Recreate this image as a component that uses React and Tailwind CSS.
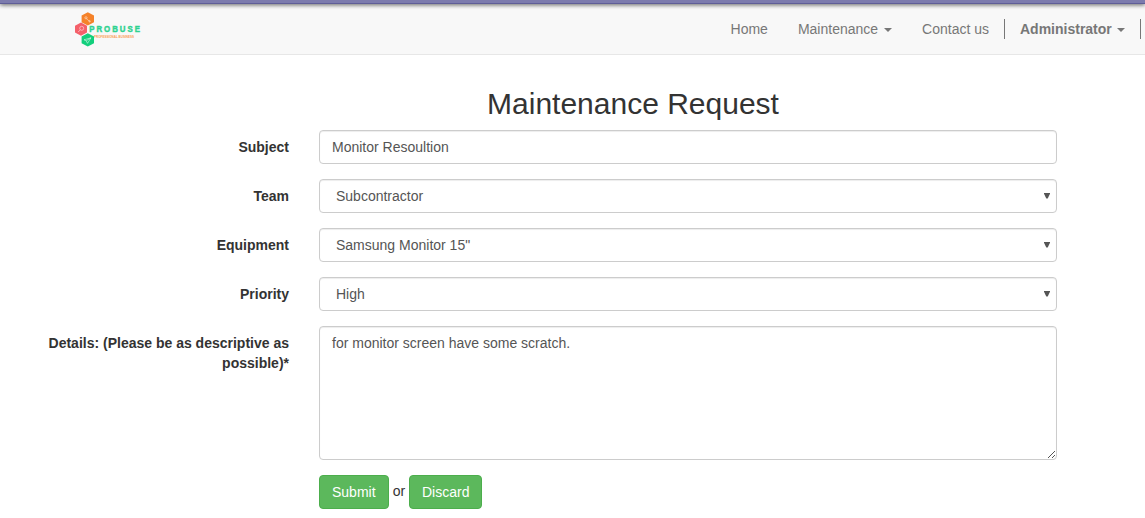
import React from "react";

const control =
  "block w-full rounded-[4px] border border-[#ccc] bg-white text-[14px] leading-[20px] text-[#555] shadow-[inset_0_1px_1px_rgba(0,0,0,0.075)] outline-none";

function Logo() {
  return (
    <svg width="70" height="38" viewBox="0 0 70 38" role="img" aria-label="Probuse">
      <g transform="translate(0 -0.7)">
        <polygon points="14.8,2 21,5.2 21,12 14.8,15.3 8.6,12 8.6,5.2" fill="#f5822a" />
        <polygon points="8,12.2 14,15.4 14,22.2 8,25.4 2,22.2 2,15.4" fill="#f4606a" />
        <polygon points="14.8,23 21,26.2 21,33 14.8,36.3 8.6,33 8.6,26.2" fill="#12cf7c" />
        <g fill="none" stroke="#fff" strokeOpacity="0.6" strokeWidth="0.8">
          <circle cx="13" cy="7.5" r="1.1" />
          <path d="M13.5 8.5l3 2.5" />
          <circle cx="16.6" cy="11" r="0.7" />
          <circle cx="8.7" cy="18" r="2" />
          <path d="M7.2 19.5l-2 2.2" />
          <path d="M11 29.5l7-2-3.5 5.5-1.3-2.5zM13.2 30.5l4.8-3" />
        </g>
      </g>
      <text
        transform="translate(16.2 20.9) scale(0.8 1)"
        x="0"
        y="0"
        textLength="63.5"
        lengthAdjust="spacing"
        fontFamily="Liberation Sans, sans-serif"
        fontWeight="700"
        fontSize="9.8"
        fill="#2fd290"
        stroke="#2fd290"
        strokeWidth="0.5"
      >
        PROBUSE
      </text>
      <text
        x="21"
        y="27"
        textLength="40"
        lengthAdjust="spacingAndGlyphs"
        fontFamily="Liberation Sans, sans-serif"
        fontWeight="700"
        fontSize="3.8"
        fill="#f9a055"
      >
        PROFESSIONAL BUSINESS
      </text>
    </svg>
  );
}

function Caret({ className = "ml-[6px]" }) {
  return (
    <span
      className={className + " inline-block border-x-4 border-t-4 border-x-transparent border-t-[#777] align-middle"}
    />
  );
}

function Row({ label, id, children }) {
  return (
    <div className="mb-[15px] flex">
      <label htmlFor={id} className="w-[289px] shrink-0 pt-[7px] pl-[30px] text-right font-bold">
        {label}
      </label>
      <div className="relative ml-[30px] w-[738px]">{children}</div>
    </div>
  );
}

function SelectRow({ label, id, value }) {
  return (
    <Row label={label} id={id}>
      <select id={id} defaultValue={value} className={control + " h-[34px] appearance-none px-[16px] py-[6px]"}>
        <option>{value}</option>
      </select>
      <svg className="pointer-events-none absolute top-[14px] right-[7px]" width="6" height="6" viewBox="0 0 6 6">
        <path d="M0 0h6v0.8L3.7 5.6H2.3L0 0.8z" fill="#555" />
      </svg>
    </Row>
  );
}

export default function App() {
  return (
    <div className="h-[518px] overflow-hidden bg-white font-['Liberation_Sans',Arial,sans-serif] text-[14px] leading-[20px] text-[#333]">
      <div className="relative h-[4px] border-b border-[#5f5e97] bg-[#7c7bad] shadow-[0_1px_4px_rgba(0,0,0,0.65)]" />
      <header className="flex h-[51px] border-b border-[#e7e7e7] bg-[#f8f8f8] text-[#777]">
        <a className="ml-[73px] pt-[7px]" href="#">
          <Logo />
        </a>
        <nav className="mt-[15px] mr-[4px] ml-auto flex h-[20px] whitespace-nowrap">
          <a className="px-[15px]" href="#">Home</a>
          <a className="px-[15px]" href="#">Maintenance<Caret /></a>
          <a className="px-[15px]" href="#">Contact us</a>
          <a className="w-[137px] border-x border-[#777] pl-[15px] font-bold" href="#">
            Administrator<Caret className="ml-[5px]" />
          </a>
        </nav>
      </header>
      <main className="pt-[32px]">
        <h2 className="mb-[10px] ml-[121px] w-[1024px] text-center text-[30px] leading-[33px]">Maintenance Request</h2>
        <form>
          <Row label="Subject" id="subject">
            <input id="subject" defaultValue="Monitor Resoultion" className={control + " h-[34px] px-[12px] py-[6px]"} />
          </Row>
          <SelectRow label="Team" id="team" value="Subcontractor" />
          <SelectRow label="Equipment" id="equipment" value={'Samsung Monitor 15"'} />
          <SelectRow label="Priority" id="priority" value="High" />
          <Row label="Details: (Please be as descriptive as possible)*" id="details">
            <textarea
              id="details"
              spellCheck={false}
              defaultValue="for monitor screen have some scratch."
              className={control + " h-[134px] resize-none px-[12px] py-[6px]"}
            />
            <svg
              className="pointer-events-none absolute right-[2px] bottom-[2px]"
              width="7"
              height="7"
              viewBox="0 0 7 7"
              fill="#555"
              shapeRendering="crispEdges"
            >
              <path d="M0 6h1v1H0zM1 5h1v1H1zM2 4h1v1H2zM3 3h1v1H3zM4 2h1v1H4zM5 1h1v1H5zM6 0h1v1H6zM4 6h1v1H4zM5 5h1v1H5zM6 4h1v1H6z" />
            </svg>
          </Row>
          <div className="ml-[319px] flex">
            <button type="button" className="h-[34px] w-[70px] rounded-[4px] border border-[#4cae4c] bg-[#5cb85c] pl-[12px] text-left text-white">
              Submit
            </button>
            <span className="w-[20px] pt-[6px] pl-[3.7px]">or</span>
            <button type="button" className="h-[34px] w-[73px] rounded-[4px] border border-[#4cae4c] bg-[#5cb85c] pl-[12px] text-left text-white">
              Discard
            </button>
          </div>
        </form>
      </main>
    </div>
  );
}
